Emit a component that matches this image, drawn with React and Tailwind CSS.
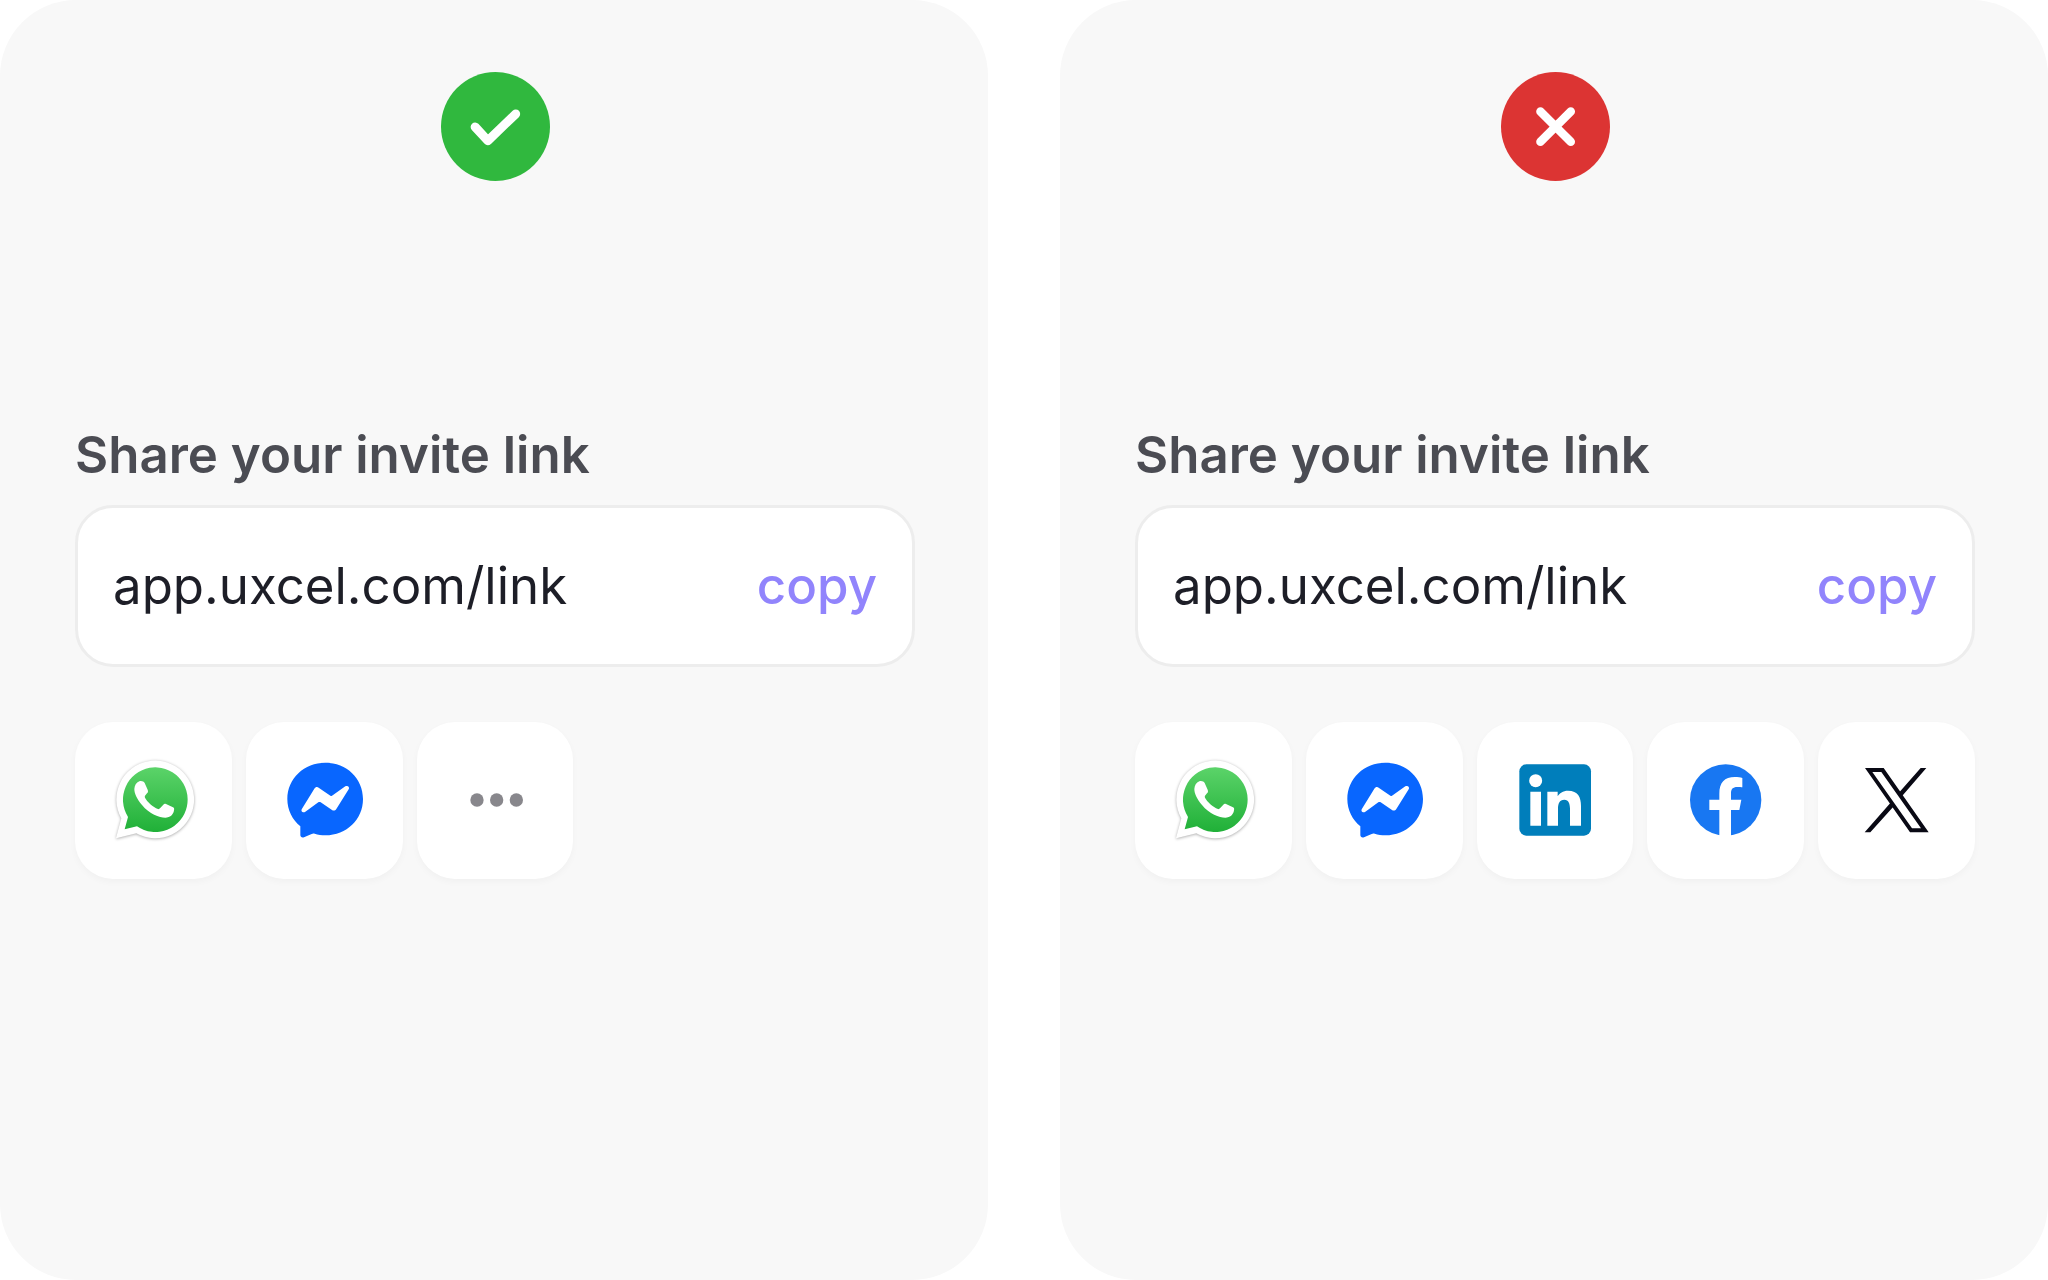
import React, { useId } from 'react';

const StatusBadge = ({ good }) => (
    <svg viewBox="0 0 110 110" className="size-[109px]" role="img" aria-label={good ? 'Do' : "Don't"}>
        <circle cx="55" cy="55" r="55" fill={good ? '#30b83e' : '#dc3433'} />
        {good ? (
            <path d="M34.4 55.4 47.3 69.3 75.4 42.3" fill="none" stroke="#fff" strokeWidth="9" strokeLinecap="round" strokeLinejoin="round" />
        ) : (
            <path d="M39.8 39.8 70.4 70.4M70.4 39.8 39.8 70.4" fill="none" stroke="#fff" strokeWidth="8.6" strokeLinecap="round" />
        )}
    </svg>
);

const WhatsAppIcon = () => {
    const gradientId = useId();
    return (
        <svg viewBox="137 157 288 288" className="size-24 overflow-visible" aria-hidden="true">
            <defs>
                <linearGradient id={gradientId} x1="0" y1="0" x2="0" y2="1">
                    <stop offset="0" stopColor="#5bd369" />
                    <stop offset="1" stopColor="#20b038" />
                </linearGradient>
            </defs>
            <path
                className="drop-shadow-[0_2px_5px_rgba(0,0,0,0.35)]"
                d="M170 416 186 356A116.5 116.5 0 1 1 231 401Z"
                fill="#fff"
            />
            <path d="M196 389 206 352A97 97 0 1 1 233 380Z" fill={`url(#${gradientId})`} />
            <path
                d="M240 245C246 243 253 245 256 250L265 270C267 275 266 278 263 281L257 288C256 290 256 292 257 294C263 306 281 322 296 328C298 329 300 328 302 326L312 315C314 312 317 312 320 313L341 323C345 325 345 328 344 332C342 346 332 354 318 354C300 354 270 343 248 316C232 297 225 281 225 268C226 258 230 249 240 245Z"
                fill="#fff"
            />
        </svg>
    );
};

const MessengerIcon = () => (
    <svg viewBox="650 157 288 288" className="size-24" aria-hidden="true">
        <path
            d="M798 189C735 189 684 236 684 298C684 331 699 360 723 380V406C723 412 728 415 734 413L757 403C760 401 763 401 766 402C776 405 787 407 798 407C862 407 911 359 911 298C911 236 862 189 798 189Z"
            fill="#0866ff"
        />
        <path
            d="M728 327 765 267C768 262 774 261 778 264L811 287C813 289 816 289 818 288L858 260C865 256 872 262 868 269L831 328C828 333 822 334 818 331L784 308C782 307 779 307 777 308L738 336C731 341 723 334 728 327Z"
            fill="#fff"
        />
    </svg>
);

const MoreIcon = () => (
    <svg viewBox="141 157 288 288" className="size-24" fill="#88878c" aria-hidden="true">
        <circle cx="231" cy="301" r="20" />
        <circle cx="290" cy="301" r="20" />
        <circle cx="349" cy="301" r="20" />
    </svg>
);

const LinkedInIcon = () => (
    <svg viewBox="140 157 288 288" className="size-24" aria-hidden="true">
        <rect x="177" y="194" width="215" height="214" rx="21" fill="#007ebb" />
        <circle cx="226" cy="243" r="19.5" fill="#fff" />
        <path
            d="M210 276H242V378H210ZM261 276H292V290C297 281 308 273 323 273C353 273 362 292 362 319V378H329V327C329 313 325 300 312 300C297 300 293 313 293 327V378H261Z"
            fill="#fff"
        />
    </svg>
);

const FacebookIcon = () => (
    <svg viewBox="653 157 288 288" className="size-24" aria-hidden="true">
        <circle cx="796" cy="301" r="107" fill="#1877f2" />
        <path
            d="M777 410V331H747V300H777V282C777 249 792 232 824 232C832 232 841 233 846 235V263C843 262 837 262 831 262C817 262 812 268 812 282V300H843L837 331H812V410Z"
            fill="#fff"
        />
    </svg>
);

const XIcon = () => (
    <svg viewBox="145 157 288 288" className="size-24" fill="#090914" aria-hidden="true">
        <path fillRule="evenodd" d="M193 205H249L384 398H328ZM215 217 334 386H361L242 217Z" />
        <path d="M360 205H377L305 288 296 278ZM192 398H209L280 319 271 308Z" />
    </svg>
);

const APPS = {
    whatsapp: { label: 'WhatsApp', Icon: WhatsAppIcon },
    messenger: { label: 'Messenger', Icon: MessengerIcon },
    linkedin: { label: 'LinkedIn', Icon: LinkedInIcon },
    facebook: { label: 'Facebook', Icon: FacebookIcon },
    x: { label: 'X', Icon: XIcon },
    more: { label: 'More options', Icon: MoreIcon },
};

const LINK = 'app.uxcel.com/link';

function SharePanel({ good, apps }) {
    const inputId = useId();

    return (
        <section className="flex-1 min-w-0 bg-[#f8f8f8] rounded-[76px] pl-[75px] pr-[73px] pt-18 pb-20">
            <div className="flex justify-center">
                <StatusBadge good={good} />
            </div>

            <div className="mt-60">
                <label htmlFor={inputId} className="block text-[51px] leading-[68px] font-semibold text-[#4b4c53]">
                    Share your invite link
                </label>

                {/* Link + copy */}
                <div className="mt-4 h-[162px] flex items-center gap-4 px-[35px] bg-white border-3 border-[#ededed] rounded-[38px]">
                    <input
                        id={inputId}
                        type="text"
                        readOnly
                        value={LINK}
                        className="flex-1 min-w-0 bg-transparent outline-none text-[51px] leading-[68px] text-[#1d1e27]"
                    />
                    <button
                        type="button"
                        onClick={() => navigator.clipboard?.writeText(LINK)}
                        className="text-[51px] leading-[68px] font-medium text-[#9184fc] cursor-pointer"
                    >
                        copy
                    </button>
                </div>

                {/* Share targets */}
                <div className="mt-[55px] grid grid-cols-5 gap-3.5">
                    {apps.map(key => {
                        const { label, Icon } = APPS[key];
                        return (
                            <button
                                key={key}
                                type="button"
                                aria-label={label}
                                className="aspect-square flex items-center justify-center bg-white rounded-[38px] shadow-[0_3px_7px_rgba(0,0,0,0.03)] cursor-pointer"
                            >
                                <Icon />
                            </button>
                        );
                    })}
                </div>
            </div>
        </section>
    );
}

export default function App() {
    return (
        <main className="min-h-screen flex gap-[72px] bg-white font-['Inter',sans-serif]">
            <SharePanel good apps={['whatsapp', 'messenger', 'more']} />
            <SharePanel good={false} apps={['whatsapp', 'messenger', 'linkedin', 'facebook', 'x']} />
        </main>
    );
}
